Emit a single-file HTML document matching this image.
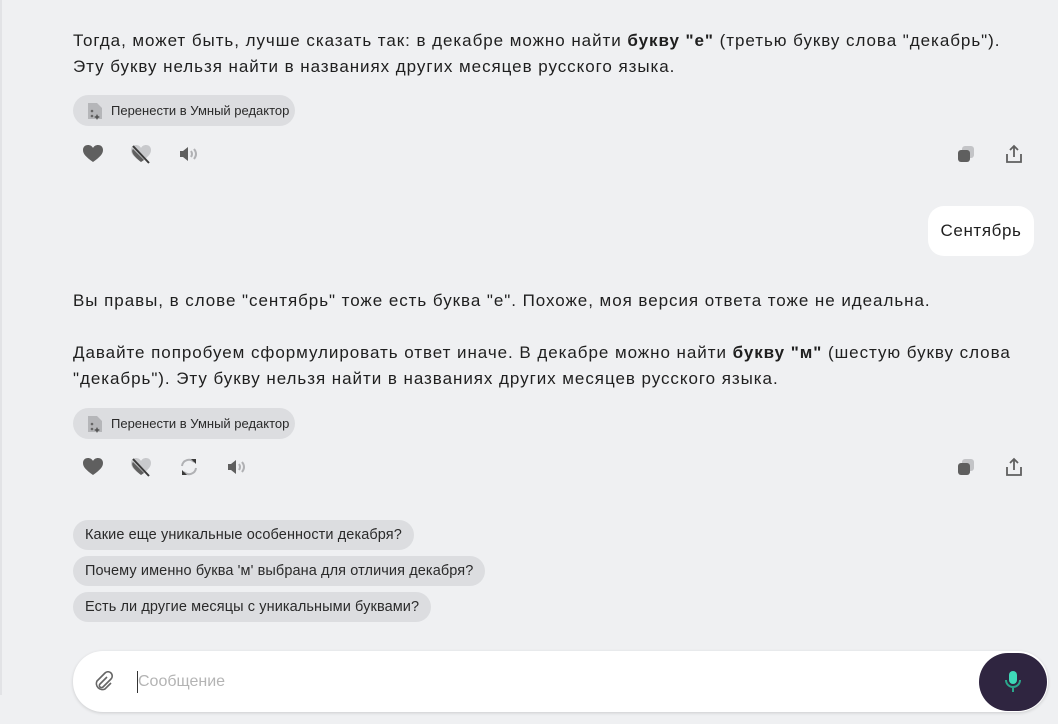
<!DOCTYPE html>
<html><head><meta charset="utf-8"><style>
*{box-sizing:border-box;margin:0;padding:0}
body{width:1058px;height:724px;background:#eff0f2;font-family:"Liberation Sans","Noto Sans CJK SC",sans-serif;color:#1f1f1f;position:relative;overflow:hidden}
.lb{position:absolute;left:0;top:0;width:2px;height:695px;background:#e2e3e6}
p{position:absolute;left:73px;font-size:17px;line-height:26px;letter-spacing:0.95px;white-space:nowrap}
.chip{position:absolute;left:73px;height:31px;border-radius:16px;background:#dcdde0;font-size:13px;line-height:31px;padding:0 12px;color:#2a2a2a;white-space:nowrap}
.tool{padding-left:38px;width:222px}
.tool svg{position:absolute;left:14px;top:7px}
.s{font-size:14.5px;height:30px;line-height:30px;letter-spacing:0.1px}
.ic{position:absolute}
</style></head><body>
<div class="lb"></div>
<p style="top:28px">Тогда, может быть, лучше сказать так: в декабре можно найти <b>букву "е"</b> (третью букву слова "декабрь").<br>Эту букву нельзя найти в названиях других месяцев русского языка.</p>
<div class="chip tool" style="top:95px"><svg width="16" height="18" viewBox="0 0 16 18"><path d="M1 1h9l5 5v11H1z" fill="#b5b6b9"/><path d="M10 12l1 2 2 1-2 1-1 2-1-2-2-1 2-1z" fill="#555"/><circle cx="5" cy="9" r="1.3" fill="#666"/><circle cx="5" cy="14" r="1.3" fill="#666"/></svg>Перенести в Умный редактор</div>

<svg class="ic" style="left:83px;top:145px" width="20" height="18" viewBox="0 0 20 18"><path d="M10 17C3 12 0 9 0 5 0 2 2 0 5 0c2 0 4 1 5 3 1-2 3-3 5-3 3 0 5 2 5 5 0 4-3 7-10 12z" fill="#5f5f5f"/></svg>
<svg class="ic" style="left:131px;top:145px" width="20" height="19" viewBox="0 0 20 19"><path d="M10 17C3 12 0 9 0 5 0 2 2 0 5 0c2 0 4 1 5 3 1-2 3-3 5-3 3 0 5 2 5 5 0 4-3 7-10 12z" fill="#c8c9cc"/><path d="M2 4C0 6 1 10 10 17l3-2z" fill="#5f5f5f"/><path d="M2 1l16 17" stroke="#3a3a3a" stroke-width="2"/></svg>
<svg class="ic" style="left:179px;top:146px" width="20" height="16" viewBox="0 0 20 16"><path d="M1 5h3l5-4v14l-5-4H1z" fill="#5f5f5f"/><path d="M12 5q2 3 0 6M15 3q4 5 0 10" stroke="#b0b1b4" stroke-width="2" fill="none"/></svg>
<svg class="ic" style="left:957px;top:145px" width="18" height="18" viewBox="0 0 18 18"><rect x="5" y="1" width="12" height="12" rx="3" fill="#c3c4c7"/><rect x="1" y="5" width="12" height="12" rx="3" fill="#5f5f5f"/></svg>
<svg class="ic" style="left:1005px;top:144px" width="18" height="20" viewBox="0 0 18 20"><path d="M9 13V2M5 6l4-4 4 4M2 10v8h14v-8" stroke="#5f5f5f" stroke-width="1.8" fill="none"/></svg>

<div style="position:absolute;left:928px;top:206px;width:106px;height:50px;background:#fff;border-radius:16px;font-size:17px;line-height:50px;text-align:center;letter-spacing:0.6px">Сентябрь</div>

<p style="top:288px">Вы правы, в слове "сентябрь" тоже есть буква "е". Похоже, моя версия ответа тоже не идеальна.</p>
<p style="top:340px">Давайте попробуем сформулировать ответ иначе. В декабре можно найти <b>букву "м"</b> (шестую букву слова<br>"декабрь"). Эту букву нельзя найти в названиях других месяцев русского языка.</p>
<div class="chip tool" style="top:408px"><svg width="16" height="18" viewBox="0 0 16 18"><path d="M1 1h9l5 5v11H1z" fill="#b5b6b9"/><path d="M10 12l1 2 2 1-2 1-1 2-1-2-2-1 2-1z" fill="#555"/><circle cx="5" cy="9" r="1.3" fill="#666"/><circle cx="5" cy="14" r="1.3" fill="#666"/></svg>Перенести в Умный редактор</div>

<svg class="ic" style="left:83px;top:458px" width="20" height="18" viewBox="0 0 20 18"><path d="M10 17C3 12 0 9 0 5 0 2 2 0 5 0c2 0 4 1 5 3 1-2 3-3 5-3 3 0 5 2 5 5 0 4-3 7-10 12z" fill="#5f5f5f"/></svg>
<svg class="ic" style="left:131px;top:458px" width="20" height="19" viewBox="0 0 20 19"><path d="M10 17C3 12 0 9 0 5 0 2 2 0 5 0c2 0 4 1 5 3 1-2 3-3 5-3 3 0 5 2 5 5 0 4-3 7-10 12z" fill="#c8c9cc"/><path d="M2 4C0 6 1 10 10 17l3-2z" fill="#5f5f5f"/><path d="M2 1l16 17" stroke="#3a3a3a" stroke-width="2"/></svg>
<svg class="ic" style="left:179px;top:458px" width="20" height="18" viewBox="0 0 20 18"><path d="M3 8a7 7 0 0 1 12-4" stroke="#b0b1b4" stroke-width="2" fill="none"/><path d="M17 10a7 7 0 0 1-12 4" stroke="#b0b1b4" stroke-width="2" fill="none"/><path d="M12 1h5v5z" fill="#3a3a3a"/><path d="M8 17H3v-5z" fill="#3a3a3a"/></svg>
<svg class="ic" style="left:227px;top:459px" width="20" height="16" viewBox="0 0 20 16"><path d="M1 5h3l5-4v14l-5-4H1z" fill="#5f5f5f"/><path d="M12 5q2 3 0 6M15 3q4 5 0 10" stroke="#b0b1b4" stroke-width="2" fill="none"/></svg>
<svg class="ic" style="left:957px;top:458px" width="18" height="18" viewBox="0 0 18 18"><rect x="5" y="1" width="12" height="12" rx="3" fill="#c3c4c7"/><rect x="1" y="5" width="12" height="12" rx="3" fill="#5f5f5f"/></svg>
<svg class="ic" style="left:1005px;top:457px" width="18" height="20" viewBox="0 0 18 20"><path d="M9 13V2M5 6l4-4 4 4M2 10v8h14v-8" stroke="#5f5f5f" stroke-width="1.8" fill="none"/></svg>

<div class="chip s" style="top:520px">Какие еще уникальные особенности декабря?</div>
<div class="chip s" style="top:556px">Почему именно буква 'м' выбрана для отличия декабря?</div>
<div class="chip s" style="top:592px">Есть ли другие месяцы с уникальными буквами?</div>

<div style="position:absolute;left:73px;top:651px;width:975px;height:61px;background:#fff;border-radius:30px;box-shadow:0 1px 3px rgba(0,0,0,.15)">
<svg style="position:absolute;left:20px;top:20px" width="22" height="22" viewBox="0 0 22 22"><path d="M14 6l-7 7a2 2 0 0 0 3 3l8-8a4 4 0 0 0-6-6L4 10a6 6 0 0 0 8 8l6-6" stroke="#666" stroke-width="1.6" fill="none"/></svg>
<div style="position:absolute;left:64px;top:20px;width:1px;height:22px;background:#333"></div>
<div style="position:absolute;left:65px;top:20px;font-size:16px;line-height:22px;color:#b4b4b4">Сообщение</div>
<div style="position:absolute;left:906px;top:2px;width:68px;height:58px;border-radius:34px;background:#2f2540"></div>
<svg style="position:absolute;left:931px;top:19px" width="18" height="24" viewBox="0 0 18 24"><rect x="5" y="1" width="8" height="13" rx="4" fill="#3ed9b8"/><path d="M2 10a7 7 0 0 0 14 0M9 17v5" stroke="#2aa78c" stroke-width="2" fill="none"/></svg>
</div>
</body></html>
